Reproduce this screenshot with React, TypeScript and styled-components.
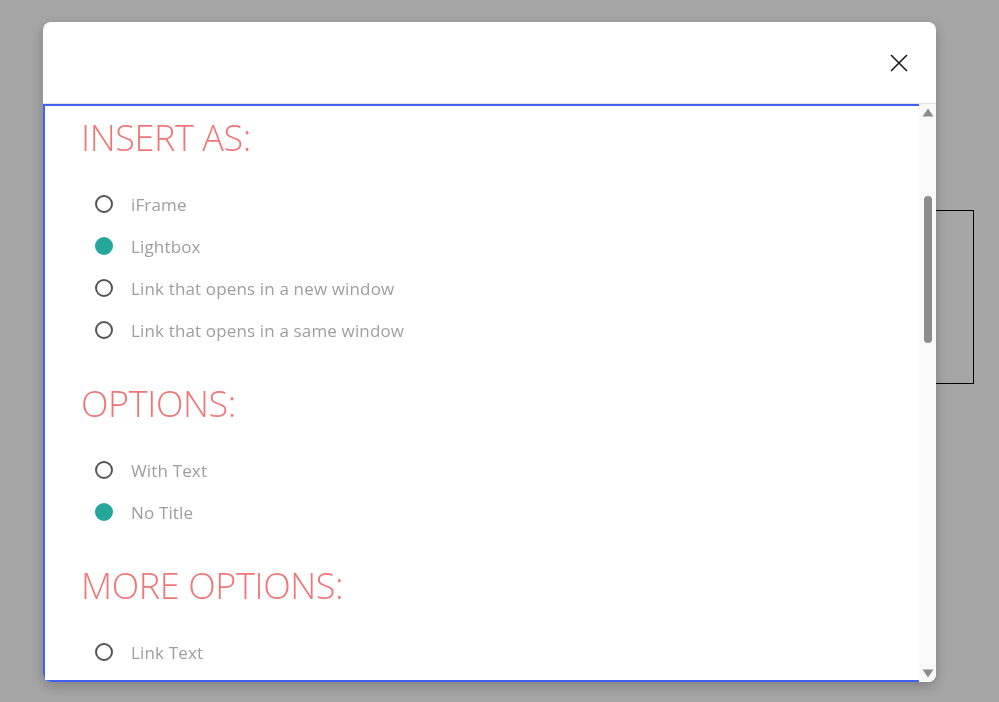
import React from "react";
import styled, { createGlobalStyle } from "styled-components";

const Global = createGlobalStyle`
  html, body { margin: 0; padding: 0; background: #fff; }
  body { font-family: "Open Sans", "Noto Sans", sans-serif; }
  * { box-sizing: border-box; }
`;

const Page = styled.div`
  width: 999px;
  height: 702px;
  padding-top: 210px;
  padding-left: 80px;
`;

const BackBox = styled.div`
  width: 894px;
  height: 174px;
  border: 1px solid #000;
`;

const Overlay = styled.div`
  position: fixed;
  inset: 0;
  background: rgba(0, 0, 0, 0.35);
  display: flex;
  align-items: flex-start;
`;

const Modal = styled.div`
  margin: 22px 0 0 43px;
  width: 893px;
  height: 660px;
  background: #fff;
  border-radius: 8px;
  box-shadow: 0 4px 14px rgba(0, 0, 0, 0.25);
  display: flex;
  flex-direction: column;
  overflow: hidden;
`;

const Header = styled.div`
  height: 82px;
  flex: none;
  border-bottom: 1px solid #e2e2e2;
  display: flex;
  align-items: center;
  justify-content: flex-end;
  padding-right: 28px;
`;

const CloseButton = styled.button`
  border: 0;
  background: none;
  padding: 0;
  width: 18px;
  height: 18px;
  display: flex;
  cursor: pointer;
`;

const Body = styled.div`
  flex: 1;
  display: flex;
  min-height: 0;
`;

const Content = styled.div`
  flex: 1;
  border: 2px solid #4062f0;
  border-right: 0;
  overflow: hidden;
  padding: 10px 0 0 36px;
`;

const Section = styled.section`
  margin-bottom: 31px;
`;

const Heading = styled.h2`
  margin: 0 0 23px;
  font-family: "Open Sans", sans-serif;
  font-weight: 300;
  font-size: 36px;
  line-height: 44px;
  color: #f07577;
  letter-spacing: -0.4px;
`;

const Row = styled.label`
  display: flex;
  align-items: center;
  height: 42px;
  padding-left: 14px;
  gap: 18px;
  cursor: pointer;
`;

const Radio = styled.span<{ $checked?: boolean }>`
  width: 18px;
  height: 18px;
  border-radius: 50%;
  flex: none;
  border: ${(p) => (p.$checked ? "0" : "2px solid #555")};
  background: ${(p) => (p.$checked ? "#26a69a" : "transparent")};
`;

const Label = styled.span`
  font-family: "Open Sans", sans-serif;
  font-size: 17px;
  letter-spacing: 0.15px;
  color: #9e9e9e;
`;

const Scrollbar = styled.div`
  width: 17px;
  flex: none;
  background: #f9f9f9;
  display: flex;
  flex-direction: column;
  align-items: center;
`;

const Arrow = styled.div`
  height: 17px;
  width: 17px;
  display: flex;
  align-items: center;
  justify-content: center;
  flex: none;
`;

const Track = styled.div`
  flex: 1;
  display: flex;
  flex-direction: column;
  align-items: center;
`;

const Thumb = styled.div`
  width: 8px;
  border-radius: 4px;
  background: #8c8c8c;
`;

const sections = [
  {
    title: "INSERT AS:",
    options: [
      { label: "iFrame", checked: false },
      { label: "Lightbox", checked: true },
      { label: "Link that opens in a new window", checked: false },
      { label: "Link that opens in a same window", checked: false },
    ],
  },
  {
    title: "OPTIONS:",
    options: [
      { label: "With Text", checked: false },
      { label: "No Title", checked: true },
    ],
  },
  {
    title: "MORE OPTIONS:",
    options: [{ label: "Link Text", checked: false }],
  },
];

export default function App() {
  return (
    <>
      <Global />
      <Page>
        <BackBox />
      </Page>
      <Overlay>
        <Modal>
          <Header>
            <CloseButton aria-label="Close">
              <svg width="18" height="18" viewBox="0 0 18 18">
                <path d="M1 1 L17 17 M17 1 L1 17" stroke="#1a1a1a" strokeWidth="1.6" fill="none" />
              </svg>
            </CloseButton>
          </Header>
          <Body>
            <Content>
              {sections.map((s) => (
                <Section key={s.title}>
                  <Heading>{s.title}</Heading>
                  {s.options.map((o) => (
                    <Row key={o.label}>
                      <Radio $checked={o.checked} />
                      <Label>{o.label}</Label>
                    </Row>
                  ))}
                </Section>
              ))}
            </Content>
            <Scrollbar>
              <Arrow>
                <svg width="12" height="9" viewBox="0 0 12 9">
                  <path d="M6 0.5 L11.5 8.5 L0.5 8.5 Z" fill="#8c8c8c" />
                </svg>
              </Arrow>
              <Track>
                <Thumb style={{ marginTop: 75, height: 147 }} />
              </Track>
              <Arrow>
                <svg width="12" height="9" viewBox="0 0 12 9">
                  <path d="M0.5 0.5 L11.5 0.5 L6 8.5 Z" fill="#8c8c8c" />
                </svg>
              </Arrow>
            </Scrollbar>
          </Body>
        </Modal>
      </Overlay>
    </>
  );
}
